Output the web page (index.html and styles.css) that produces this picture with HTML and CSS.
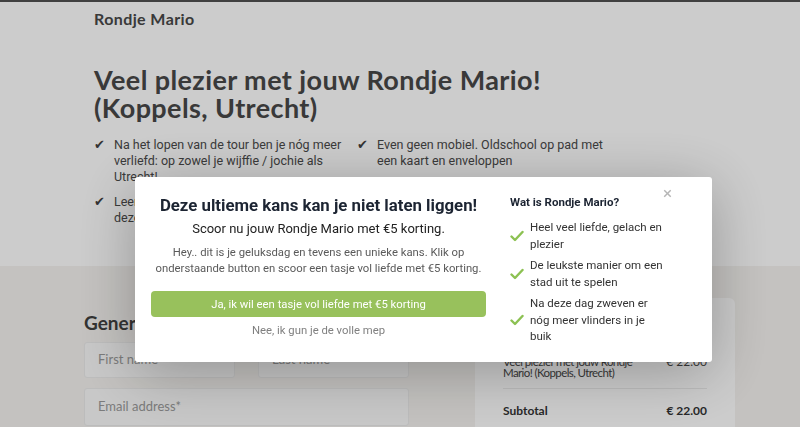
FILE: index.html
```html
<!DOCTYPE html>
<html lang="nl">
<head>
<meta charset="utf-8">
<title>Rondje Mario</title>
<link rel="stylesheet" href="styles.css">
</head>
<body>
<header class="site-header">
  <div class="brand">Rondje Mario</div>
</header>
<section class="hero">
  <h1 class="hero-title">Veel plezier met jouw Rondje Mario!<br>(Koppels, Utrecht)</h1>
  <ul class="features">
    <li class="feature"><span class="tick">&#10004;</span><span>Na het lopen van de tour ben je nóg meer verliefd: op zowel je wijffie / jochie als Utrecht!</span></li>
    <li class="feature"><span class="tick">&#10004;</span><span>Even geen mobiel. Oldschool op pad met een kaart en enveloppen</span></li>
    <li class="feature"><span class="tick">&#10004;</span><span>Leer elkaar nog véél beter kennen tijdens deze tour</span></li>
    <li class="feature"><span class="tick">&#10004;</span><span>Ontdek de mooiste plekjes</span></li>
  </ul>
</section>
<section class="checkout">
  <div class="form-col">
    <h2 class="form-title">General information</h2>
    <div class="input-row">
      <div class="input">First name</div>
      <div class="input">Last name</div>
    </div>
    <div class="input input-wide">Email address*</div>
  </div>
  <aside class="order-card">
    <div class="order-item">
      <span class="order-name">Veel plezier met jouw Rondje Mario! (Koppels, Utrecht)</span>
      <span class="order-price">€ 22.00</span>
    </div>
    <div class="order-total">
      <span>Subtotal</span>
      <span>€ 22.00</span>
    </div>
  </aside>
</section>

<div class="overlay">
  <div class="modal">
    <div class="modal-main">
      <h3 class="modal-title">Deze ultieme kans kan je niet laten liggen!</h3>
      <p class="modal-sub">Scoor nu jouw Rondje Mario met €5 korting.</p>
      <p class="modal-body">Hey.. dit is je geluksdag en tevens een unieke kans. Klik op onderstaande button en scoor een tasje vol liefde met €5 korting.</p>
      <button class="btn-yes">Ja, ik wil een tasje vol liefde met €5 korting</button>
      <div class="btn-no">Nee, ik gun je de volle mep</div>
    </div>
    <div class="modal-side">
      <h4 class="side-title">Wat is Rondje Mario?</h4>
      <ul class="side-list">
        <li class="side-item"><svg class="check" viewBox="0 0 14 12" width="14" height="12"><path d="M1.5 6.5 L5 10 L12.5 2" fill="none" stroke="#8cc152" stroke-width="2.4" stroke-linecap="round" stroke-linejoin="round"/></svg><span>Heel veel liefde, gelach en plezier</span></li>
        <li class="side-item"><svg class="check" viewBox="0 0 14 12" width="14" height="12"><path d="M1.5 6.5 L5 10 L12.5 2" fill="none" stroke="#8cc152" stroke-width="2.4" stroke-linecap="round" stroke-linejoin="round"/></svg><span>De leukste manier om een stad uit te spelen</span></li>
        <li class="side-item"><svg class="check" viewBox="0 0 14 12" width="14" height="12"><path d="M1.5 6.5 L5 10 L12.5 2" fill="none" stroke="#8cc152" stroke-width="2.4" stroke-linecap="round" stroke-linejoin="round"/></svg><span>Na deze dag zweven er nóg meer vlinders in je buik</span></li>
      </ul>
    </div>
    <span class="close">&#215;</span>
  </div>
</div>
</body>
</html>
```
FILE: styles.css
```css
* { box-sizing: border-box; }
html, body { margin: 0; padding: 0; }
body {
  font-family: Lato, "Open Sans", sans-serif;
  color: #484848;
  background: #ffffff;
  border-top: 2px solid #505050;
  height: 427px;
  overflow: hidden;
}
.site-header {
  padding: 7px 94px 0;
  height: 36px;
}
.brand {
  font-size: 16px;
  font-weight: 700;
  line-height: 20px;
  letter-spacing: 0.4px;
  color: #484848;
}
.hero {
  padding: 28px 94px 0;
  height: 228px;
}
.hero-title {
  margin: 0;
  font-size: 27px;
  line-height: 28px;
  font-weight: 700;
  letter-spacing: 0.4px;
  color: #484848;
}
.features {
  list-style: none;
  margin: 15px 0 0;
  padding: 0;
  display: grid;
  grid-template-columns: 263px 263px;
  row-gap: 9px;
}
.feature {
  display: flex;
  gap: 8px;
  font-family: Roboto, sans-serif;
  font-size: 12.5px;
  line-height: 16px;
  color: #4a4a4a;
  padding-right: 10px;
}
.tick {
  font-size: 13px;
  width: 12px;
  flex: none;
  color: #404040;
}
.checkout {
  background: #f5f3f0;
  display: flex;
  gap: 66px;
  padding: 0 0 0 84px;
  height: 200px;
}
.form-col {
  width: 325px;
  padding-top: 46px;
}
.form-title {
  margin: 0 0 8px;
  font-size: 19px;
  line-height: 22px;
  font-weight: 700;
  color: #404040;
}
.input-row {
  display: flex;
  gap: 23px;
  margin-bottom: 10px;
}
.input {
  flex: 1;
  height: 36px;
  border: 1px solid #ececec;
  border-radius: 3px;
  background: #fafafa;
  font-size: 13px;
  color: #9a9a9a;
  padding: 8px 13px;
  line-height: 16px;
}
.input-wide {
  height: 38px;
  padding: 9px 13px;
}
.order-card {
  margin-top: 32px;
  width: 260px;
  background: #ffffff;
  border-radius: 6px;
  padding: 58px 28px 0;
}
.order-item {
  display: flex;
  justify-content: space-between;
  font-size: 12px;
  line-height: 11px;
  color: #484848;
  padding-bottom: 10px;
  border-bottom: 1px solid #ececec;
}
.order-name { width: 130px; font-size: 11.5px; letter-spacing: -0.6px; }
.order-total {
  display: flex;
  justify-content: space-between;
  font-size: 12px;
  font-weight: 700;
  color: #333;
  padding-top: 14px;
}

.overlay {
  position: fixed;
  inset: 0;
  background: rgba(0, 0, 0, 0.2);
}
.modal {
  position: absolute;
  left: 135px;
  top: 177px;
  width: 577px;
  height: 185px;
  background: #fff;
  border-radius: 3px;
  box-shadow: 0 10px 60px rgba(0, 0, 0, 0.28);
  display: flex;
  gap: 24px;
  padding: 0 16px;
  font-family: Roboto, sans-serif;
}
.modal-main {
  width: 335px;
  flex: none;
  text-align: center;
  padding-top: 17px;
}
.modal-title {
  margin: 0;
  font-size: 16.8px;
  line-height: 22px;
  font-weight: 700;
  color: #1c2432;
}
.modal-sub {
  margin: 3px 0 0;
  font-size: 13px;
  line-height: 20px;
  color: #222;
}
.modal-body {
  margin: 6px -6px 0;
  font-size: 11.3px;
  line-height: 16px;
  color: #5a5a5a;
}
.btn-yes {
  margin-top: 14px;
  width: 100%;
  height: 26px;
  border: none;
  border-radius: 4px;
  background: #98c15c;
  color: #fff;
  font-family: Roboto, sans-serif;
  font-size: 11.3px;
  padding: 0;
}
.btn-no {
  margin-top: 6px;
  font-size: 11.3px;
  line-height: 16px;
  color: #808080;
}
.modal-side {
  flex: 1;
  padding-top: 17px;
}
.side-title {
  margin: 0 0 9px;
  font-size: 11.5px;
  line-height: 16px;
  font-weight: 700;
  color: #1c2432;
}
.side-list {
  list-style: none;
  margin: 0;
  padding: 0;
  width: 154px;
}
.side-item {
  display: flex;
  align-items: center;
  gap: 6px;
  font-size: 11.5px;
  line-height: 16.5px;
  color: #333;
  margin-bottom: 5px;
}
.check { flex: none; }
.close {
  position: absolute;
  right: 40px;
  top: 6px;
  font-size: 17px;
  color: #b5b5b5;
  line-height: 20px;
}
```
